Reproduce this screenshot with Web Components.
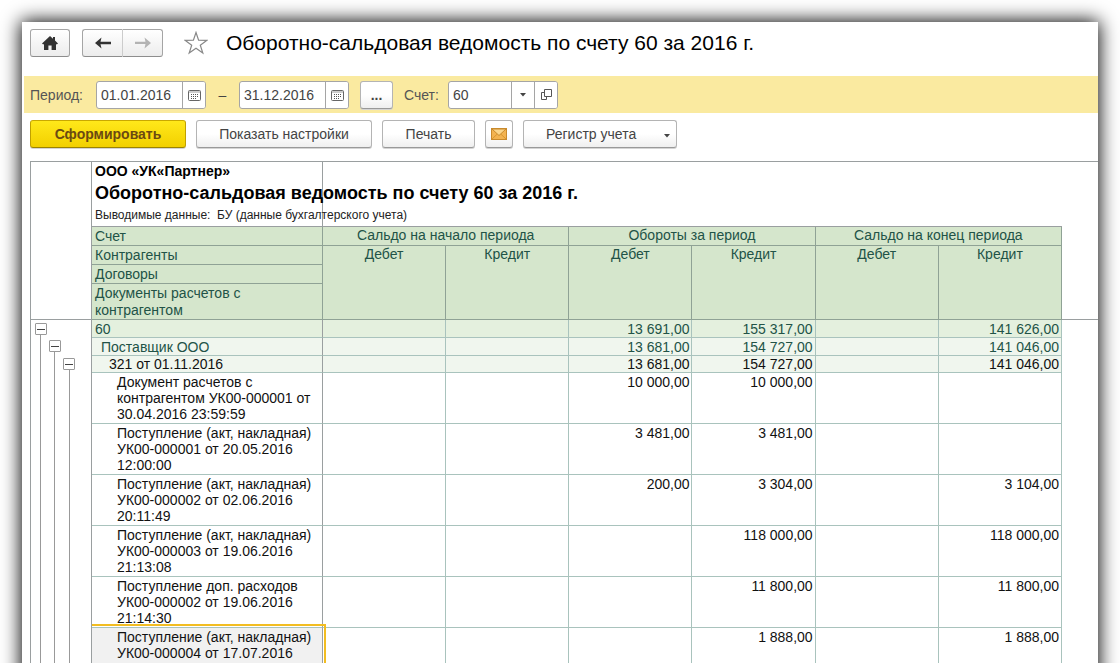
<!DOCTYPE html>
<html lang="ru">
<head>
<meta charset="utf-8">
<meta name="viewport" content="width=device-width, initial-scale=1">
<title>Оборотно-сальдовая ведомость по счету 60 за 2016 г.</title>
<style>
  html, body { height: 100%; margin: 0; }
  body {
    overflow: hidden;
    background: #fff;
    font: 14px/16px "Liberation Sans", Arial, sans-serif;
    color: #444;
    --edge: #a5a5a5;
  }
</style>
</head>
<body>
<app-window>
  <title-bar slot="title">Оборотно-сальдовая ведомость по счету 60 за 2016 г.</title-bar>
  <filter-bar slot="filter"></filter-bar>
  <command-bar slot="commands">
    <ui-button primary style="--w:156px">Сформировать</ui-button>
    <ui-button style="--w:176px">Показать настройки</ui-button>
    <ui-button style="--w:93px">Печать</ui-button>
    <ui-button label="Отправить по почте" style="--w:28px">
      <svg width="16" height="12" viewBox="0 0 16 12"><rect x=".5" y=".5" width="15" height="11" fill="#f3b350" stroke="#c98a2c"/><path d="M1 11 6.3 6M15 11 9.7 6" stroke="#d9962f" fill="none"/><path d="M1 1h14L8 7.5z" fill="#fbd68c" stroke="#c98a2c"/></svg>
    </ui-button>
    <ui-button menu style="--w:154px">Регистр учета</ui-button>
  </command-bar>
  <report-sheet></report-sheet>
</app-window>

<script>
const define = (name, html, setup) => customElements.define(name, class extends HTMLElement {
  connectedCallback() {
    if (this.shadowRoot) return;
    const template = document.createElement('template');
    template.innerHTML = html;
    this.attachShadow({ mode: 'open' }).append(template.content.cloneNode(true));
    if (setup) setup(this, this.shadowRoot);
  }
});

define('app-window', `
  <style>
    :host { display: flex; flex-direction: column; height: 100vh; margin: 22px 22px 0;
      background: #fff; box-shadow: 0 0 18px 1px #000; box-sizing: border-box; }
    .pane { flex: 1; min-height: 0; overflow: hidden; padding-left: 8px; }
  </style>
  <slot name="title"></slot>
  <slot name="filter"></slot>
  <slot name="commands"></slot>
  <div class="pane"><slot></slot></div>`);

define('title-bar', `
  <style>
    :host { display: flex; align-items: center; height: 54px; padding: 0 8px 12px; box-sizing: border-box; }
    button { display: grid; place-items: center; width: 40px; height: 28px; padding: 0; box-sizing: border-box;
      border: 1px solid var(--edge); border-bottom-color: #8d8d8d; border-radius: 3px;
      background: linear-gradient(#fff, #ececec); }
    .pair { display: flex; margin-left: 12px; }
    .pair button:first-child { border-radius: 3px 0 0 3px; border-right-color: #ccc; width: 41px; }
    .pair button:last-child { border-radius: 0 3px 3px 0; border-left: 0; }
    .star { width: 24px; margin: 0 18px 0 21px; border: 0; background: none; }
    h1 { margin: 0; font-size: 21px; line-height: 24px; font-weight: 400; color: #000; white-space: nowrap; }
  </style>
  <button type="button" aria-label="Начальная страница">
    <svg width="16" height="14" viewBox="0 0 16 14"><path d="M8 0 0 7.4l1.2 1.2L2 8v6h4.4V9.500h3.200V14H14V8l.8.6L16 7.400 13 4.600V1h-2v1.800z" fill="#333"/></svg>
  </button>
  <div class="pair">
    <button type="button" aria-label="Назад"><svg width="16" height="12" viewBox="0 0 16 12"><path d="M0 6 6.500.500 5.500 4.700H16v2.600H5.500l1 4.200z" fill="#333"/></svg></button>
    <button type="button" aria-label="Вперед"><svg width="16" height="12" viewBox="0 0 16 12"><path d="M16 6 9.500.500l1 4.300H0v2.300h10.500l-1 4.400z" fill="#b3b3b3"/></svg></button>
  </div>
  <button type="button" class="star" aria-label="В избранное">
    <svg width="24" height="24" viewBox="0 0 24 24"><path d="m12 1.500 2.600 7.700 8.400.1-6.700 4.900 2.500 7.900-6.800-4.800-6.800 4.800 2.500-7.900L1 9.300l8.400-.1z" fill="#fff" stroke="#888" stroke-width="1.200"/></svg>
  </button>
  <h1><slot></slot></h1>`);

const fieldStyle = `
  :host { display: flex; align-items: center; }
  .box { display: flex; height: 28px; box-sizing: border-box; border: 1px solid var(--edge); border-radius: 3px; background: #fff; overflow: hidden; }
  input { min-width: 0; padding: 0 4px; border: 0; outline: 0; background: none; font: inherit; color: #444; box-sizing: border-box; }
  button { display: grid; place-items: center; width: 23px; padding: 0; border: 0; border-left: 1px solid var(--edge); background: #fff; }
  label { white-space: nowrap; color: #555; }`;

define('date-field', `
  <style>${fieldStyle}
    input { width: 85px; }
    label:not(:empty) { width: 66px; }
  </style>
  <label for="date"></label>
  <div class="box">
    <input id="date" type="text">
    <button type="button" aria-label="Выбрать дату">
      <svg width="13" height="12" viewBox="0 0 13 12"><rect x=".5" y="1.500" width="12" height="10" rx="1" fill="#fff" stroke="#666"/><path d="M1 3h11" stroke="#999"/><path d="M3 5.500h8M3 7.500h8M3 9.500h5" stroke="#555" stroke-dasharray="1 1"/></svg>
    </button>
  </div>`, (host, root) => {
    const input = root.querySelector('input');
    root.querySelector('label').textContent = host.getAttribute('label') || '';
    input.value = host.getAttribute('value');
    if (!host.hasAttribute('label')) input.setAttribute('aria-label', 'Конец периода');
  });

define('account-field', `
  <style>${fieldStyle}
    input { width: 62px; }
    label { width: 44px; }
  </style>
  <label for="account">Счет:</label>
  <div class="box">
    <input id="account" type="text" value="60">
    <button type="button" aria-label="Выбрать из списка"><svg width="6" height="4" viewBox="0 0 6 4"><path d="M0 0h6L3 3.500z" fill="#444"/></svg></button>
    <button type="button" aria-label="Открыть"><svg width="11" height="11" viewBox="0 0 11 11" fill="none" stroke="#555"><path d="M3.500.500h7v7h-7z"/><path d="M3.500 3.500h-3v7h5v-3"/></svg></button>
  </div>`);

define('filter-bar', `
  <style>
    :host { display: flex; align-items: center; height: 37px; margin-left: 2px; padding-left: 6px; background: #faeaa0; box-sizing: border-box; }
    .dash { width: 33px; text-align: center; }
    .more { margin: 0 11px; }
  </style>
  <date-field label="Период:" value="01.01.2016"></date-field>
  <span class="dash">–</span>
  <date-field value="31.12.2016"></date-field>
  <ui-button class="more" style="--w:33px"><b>...</b></ui-button>
  <account-field></account-field>`);

define('command-bar', `
  <style>:host { display: flex; gap: 10px; padding: 7px 8px 13px; }</style>
  <slot></slot>`);

define('ui-button', `
  <style>
    :host { display: block; flex: none; }
    button { display: flex; align-items: center; justify-content: center; width: var(--w); height: 28px; padding: 0; box-sizing: border-box;
      border: 1px solid #b4b4b4; border-bottom-color: #999; border-radius: 3px; box-shadow: 0 1px #d4d4d4;
      background: linear-gradient(#fff 50%, #efefef); font: inherit; color: #444; white-space: nowrap; }
    :host([primary]) button { border-color: #c9a800 #c0a000 #9c8300; background: linear-gradient(#ffe81a, #f2d000); font-weight: 700; color: #6b4a12; }
    svg { display: none; }
    :host([menu]) button { justify-content: space-between; padding: 0 6px 0 22px; }
    :host([menu]) svg { display: block; margin-top: 4px; }
  </style>
  <button type="button"><slot></slot><svg width="6" height="4" viewBox="0 0 6 4"><path d="M0 0h6L3 3.500z" fill="#444"/></svg></button>`,
  (host, root) => {
    const button = root.querySelector('button');
    if (host.hasAttribute('label')) button.setAttribute('aria-label', host.getAttribute('label'));
    if (host.hasAttribute('menu')) button.setAttribute('aria-haspopup', 'menu');
  });

// level, name, then the six amounts: opening, turnover and closing (debit, credit)
const rows = [
  [0, '60', '', '', '13 691,00', '155 317,00', '', '141 626,00'],
  [1, 'Поставщик ООО', '', '', '13 681,00', '154 727,00', '', '141 046,00'],
  [2, '321 от 01.11.2016', '', '', '13 681,00', '154 727,00', '', '141 046,00'],
  [3, 'Документ расчетов с<br>контрагентом УК00-000001 от<br>30.04.2016 23:59:59', '', '', '10 000,00', '10 000,00', '', ''],
  [3, 'Поступление (акт, накладная)<br>УК00-000001 от 20.05.2016<br>12:00:00', '', '', '3 481,00', '3 481,00', '', ''],
  [3, 'Поступление (акт, накладная)<br>УК00-000002 от 02.06.2016<br>20:11:49', '', '', '200,00', '3 304,00', '', '3 104,00'],
  [3, 'Поступление (акт, накладная)<br>УК00-000003 от 19.06.2016<br>21:13:08', '', '', '', '118 000,00', '', '118 000,00'],
  [3, 'Поступление доп. расходов<br>УК00-000002 от 19.06.2016<br>21:14:30', '', '', '', '11 800,00', '', '11 800,00'],
  [3, 'Поступление (акт, накладная)<br>УК00-000004 от 17.07.2016', '', '', '', '1 888,00', '', '1 888,00']
];
const bodyRows = rows.map(([level, name, ...sums], i) => `
  <tr class="l${level}${i === rows.length - 1 ? ' current' : ''}">
    <td class="tree">${level < 3 ? '<button type="button" aria-label="Свернуть"></button>' : ''}</td>
    <th scope="row">${name}</th>
    ${sums.map(s => `<td class="sum">${s}</td>`).join('')}
    <td></td>
  </tr>`).join('');

define('report-sheet', `
  <style>
    :host { display: block; --rule: #9a9fa0; --line: #a9c3bd; --green: #225347; }
    table { width: 100%; table-layout: fixed; border-collapse: separate; border-spacing: 0; border-top: 1px solid var(--rule); border-left: 1px solid var(--rule); }
    .c-tree { width: 61px; } .c-name { width: 231px; } .c-rest { width: 36px; }
    td, th { padding: 0; vertical-align: top; text-align: left; font-weight: 400; box-sizing: border-box; font-size: 14px; line-height: 16px; }
    .corner { border-right: 1px solid var(--rule); border-bottom: 1px solid var(--rule); }
    .rest { border-bottom: 1px solid var(--rule); }
    .heading { height: 65px; padding-left: 3px; border-right: 1px solid var(--rule); border-bottom: 1px solid var(--rule); white-space: nowrap; color: #000; }
    .gap { border-bottom: 1px solid var(--rule); }
    .heading p, .heading h2 { margin: 0; }
    .heading .org { font-size: 14px; line-height: 19px; font-weight: 700; }
    .heading h2 { font-size: 18px; line-height: 24px; }
    .heading .note { font-size: 12px; line-height: 21px; color: #222; }
    .head th { height: 19px; padding: 1px 0 0 3px; border-right: 1px solid #8fa295; border-bottom: 1px solid #8fa295; background: #d5e6cc; color: var(--green); }
    .head .mid { text-align: center; padding: 0; }
    .head .tall { height: 36px; line-height: 17px; }
    tbody th, .sum { border-right: 1px solid var(--line); border-bottom: 1px solid var(--line); color: #111; }
    tbody th { border-right-color: var(--rule); white-space: nowrap; padding-top: 1px; }
    .sum { text-align: right; padding: 1px 2px 0 0; }
    .tree { border-right: 1px solid var(--rule); }
    .l0 th, .l0 .sum { height: 18px; background: #e4f0de; color: var(--green); padding-left: 3px; }
    .l1 th, .l1 .sum { height: 18px; background: #f0f6ee; color: var(--green); padding-left: 9px; }
    .l2 th, .l2 .sum { height: 17px; background: #f0f6ee; padding: 0 2px 0 17px; }
    .l3 th { height: 51px; padding-left: 25px; }
    .tree { --v: linear-gradient(#999, #999); background-repeat: no-repeat; }
    .l0 .tree { background-image: var(--v); background-size: 1px 8px; background-position: 9px 100%; }
    .l1 .tree { background-image: var(--v), var(--v); background-size: 1px 100%, 1px 8px; background-position: 9px 0, 23px 100%; }
    .l2 .tree { background-image: var(--v), var(--v), var(--v); background-size: 1px 100%, 1px 100%, 1px 8px; background-position: 9px 0, 23px 0, 38px 100%; }
    .l3 .tree { background-image: var(--v), var(--v), var(--v); background-size: 1px 100%; background-position: 9px 0, 23px 0, 38px 0; }
    .tree button { display: block; width: 12px; height: 12px; margin: 3px 0 0 4px; padding: 0; border: 1px solid #999; border-radius: 1px;
      background: linear-gradient(#444, #444) center / 8px 1px no-repeat #fff; }
    .l1 .tree button { margin: 2px 0 0 18px; }
    .l2 .tree button { margin: 2px 0 0 32px; }
    .current th { position: relative; background: #f1f1f1; }
    .current th::after { content: ""; position: absolute; inset: -4px -4px -4px 0; border: 2px solid #f2bd22; border-left: 0; }
  </style>
  <table>
    <colgroup><col class="c-tree"><col class="c-name"><col span="6"><col class="c-rest"></colgroup>
    <thead>
      <tr>
        <td class="corner" rowspan="5"></td>
        <td class="heading">
          <p class="org">ООО «УК«Партнер»</p>
          <h2>Оборотно-сальдовая ведомость по счету 60 за 2016 г.</h2>
          <p class="note">Выводимые данные:&nbsp; БУ (данные бухгалтерского учета)</p>
        </td>
        <td class="gap" colspan="6"></td>
        <td class="rest" rowspan="5"></td>
      </tr>
      <tr class="head">
        <th scope="col">Счет</th>
        <th class="mid" colspan="2">Сальдо на начало периода</th>
        <th class="mid" colspan="2">Обороты за период</th>
        <th class="mid" colspan="2">Сальдо на конец периода</th>
      </tr>
      <tr class="head">
        <th scope="col">Контрагенты</th>
        ${'<th class="mid" scope="col" rowspan="3">Дебет</th><th class="mid" scope="col" rowspan="3">Кредит</th>'.repeat(3)}
      </tr>
      <tr class="head"><th scope="col">Договоры</th></tr>
      <tr class="head"><th class="tall" scope="col">Документы расчетов с<br>контрагентом</th></tr>
    </thead>
    <tbody>${bodyRows}</tbody>
  </table>`);
</script>
</body>
</html>
